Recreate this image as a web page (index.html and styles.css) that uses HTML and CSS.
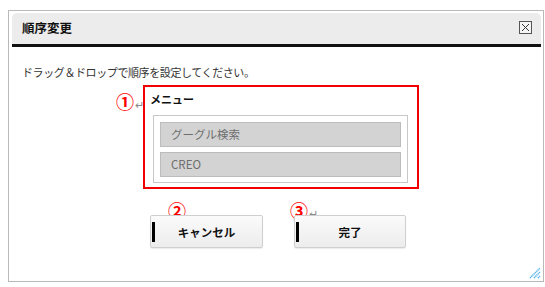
FILE: index.html
```html
<!DOCTYPE html>
<html lang="ja">
<head>
<meta charset="utf-8">
<link rel="stylesheet" href="styles.css">
</head>
<body>
<div class="dialog">
  <div class="titlebar">
    <span class="title">順序変更</span>
    <span class="close">
      <svg width="13" height="13" viewBox="0 0 13 13"><rect x="0.5" y="0.5" width="12" height="12" fill="#f4f4f4" stroke="#555"/><path d="M3 3L10 10M10 3L3 10" stroke="#333" stroke-width="1"/></svg>
    </span>
  </div>
  <div class="content">
    <p class="lead">ドラッグ＆ドロップで順序を設定してください。</p>
    <div class="menu-row">
      <span class="mark mark-1">①<span class="ret">↵</span></span>
      <div class="redbox">
        <div class="label">メニュー</div>
        <div class="list">
          <div class="item">グーグル検索</div>
          <div class="item">CREO</div>
        </div>
      </div>
    </div>
    <div class="buttons">
      <div class="btn-wrap">
        <span class="mark mark-2">②</span>
        <button class="btn btn-cancel"><span class="bar"></span>キャンセル</button>
      </div>
      <div class="btn-wrap">
        <span class="mark mark-3">③<span class="ret">↵</span></span>
        <button class="btn btn-ok"><span class="bar"></span>完了</button>
      </div>
    </div>
  </div>
  <svg class="grip" width="12" height="12" viewBox="0 0 12 12"><path d="M1 11L11 1M5 11L11 5M9 11L11 9" stroke="#5ab4f0" stroke-width="1.6" stroke-dasharray="1.2 0.6"/></svg>
</div>
</body>
</html>
```

FILE: styles.css
```css
* { box-sizing: border-box; }
html, body { margin: 0; padding: 0; background: #fff; }
body {
  font-family: "Noto Sans CJK JP", "Liberation Sans", sans-serif;
  font-size: 12px;
  color: #222;
}
.dialog {
  position: relative;
  margin: 10px 0 0 8px;
  width: 536px;
  height: 272px;
  border: 1px solid #b9b9b9;
  padding: 2px 2px 0 3px;
}
.titlebar {
  height: 34px;
  background: #ececec;
  border-radius: 5px 5px 0 0;
  border-bottom: 3px solid #111;
  display: flex;
  align-items: center;
  justify-content: space-between;
  padding: 0 9px 2px 10px;
}
.title {
  font-weight: bold;
  font-size: 12.5px;
  color: #111;
}
.close { display: flex; }
.content { padding: 0 0 0 10px; }
.lead {
  margin: 0;
  padding-top: 16px;
  height: 38px;
  line-height: 18px;
  font-size: 11px;
  letter-spacing: -0.4px;
  color: #333;
}
.menu-row {
  display: flex;
  align-items: flex-start;
  margin-left: 94px;
}
.mark {
  color: #f00;
  font-size: 18px;
  line-height: 16px;
  font-weight: bold;
  white-space: nowrap;
}
.ret { color: #888; font-size: 11px; font-weight: normal; margin-left: 1px; }
.mark-1 { margin-top: 8px; width: 27px; }
.redbox {
  width: 276px;
  height: 104px;
  border: 2px solid #f20000;
  padding: 4px 9px 0 8px;
}
.label {
  font-weight: bold;
  font-size: 11px;
  line-height: 16px;
  height: 24px;
  margin-left: -3px;
  color: #111;
}
.list {
  border: 1px solid #c8c8c8;
  padding: 6px 6px 5px 6px;
  display: flex;
  flex-direction: column;
  gap: 5px;
}
.item {
  height: 25px;
  background: #d3d3d3;
  border: 1px solid #bcbcbc;
  color: #6e6e6e;
  font-size: 11.5px;
  line-height: 23px;
  padding-left: 10px;
}
.buttons {
  display: flex;
  gap: 31px;
  margin-left: 128px;
  margin-top: 26px;
}
.btn-wrap { position: relative; }
.mark-2 { position: absolute; left: 18px; top: -13px; }
.mark-3 { position: absolute; left: -4px; top: -13px; }
.btn {
  position: relative;
  height: 33px;
  border: 1px solid #cfcfcf;
  border-radius: 2px;
  background: linear-gradient(#fbfbfb, #ececec);
  font-family: inherit;
  font-size: 11.5px;
  font-weight: bold;
  color: #111;
  padding: 0;
  box-shadow: 0 1px 1px rgba(0,0,0,0.08);
}
.btn-cancel { width: 113px; }
.btn-ok { width: 112px; }
.bar {
  position: absolute;
  left: 1px;
  top: 6px;
  width: 3px;
  height: 20px;
  background: #000;
}
.grip { position: absolute; right: 2px; bottom: 2px; }
```
